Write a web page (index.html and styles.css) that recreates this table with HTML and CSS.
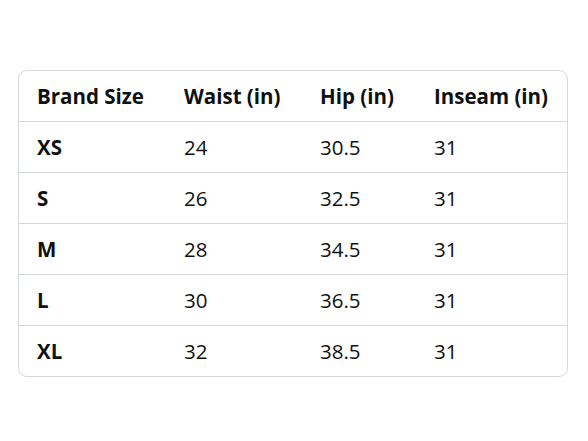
FILE: index.html
```html
<!DOCTYPE html>
<html>
<head>
<meta charset="utf-8">
<link rel="stylesheet" href="styles.css">
</head>
<body>
<div class="page">
  <table class="size-table">
    <colgroup>
      <col class="c1"><col class="c2"><col class="c3"><col class="c4">
    </colgroup>
    <thead>
      <tr><th>Brand Size</th><th>Waist (in)</th><th>Hip (in)</th><th>Inseam (in)</th></tr>
    </thead>
    <tbody>
      <tr><th>XS</th><td>24</td><td>30.5</td><td>31</td></tr>
      <tr><th>S</th><td>26</td><td>32.5</td><td>31</td></tr>
      <tr><th>M</th><td>28</td><td>34.5</td><td>31</td></tr>
      <tr><th>L</th><td>30</td><td>36.5</td><td>31</td></tr>
      <tr><th>XL</th><td>32</td><td>38.5</td><td>31</td></tr>
    </tbody>
  </table>
</div>
</body>
</html>
```

FILE: styles.css
```css
html, body {
  margin: 0;
  padding: 0;
  background: #ffffff;
}
.page {
  padding: 70px 0 0 18px;
  font-family: "Open Sans", "Noto Sans", sans-serif;
  color: #0f1111;
}
.size-table {
  width: 550px;
  border-collapse: separate;
  border-spacing: 0;
  border: 1px solid #d5d9d9;
  border-radius: 9px;
  table-layout: fixed;
  font-size: 20.5px;
}
.c1 { width: 147px; }
.c2 { width: 136px; }
.c3 { width: 114px; }
.c4 { width: 151px; }
.size-table th,
.size-table td {
  height: 50px;
  padding: 0 0 0 18px;
  text-align: left;
  vertical-align: middle;
  line-height: 24px;
  white-space: nowrap;
}
.size-table th { font-weight: 700; }
.size-table td { font-weight: 400; }
.size-table tbody tr th,
.size-table tbody tr td {
  border-top: 1px solid #d5d9d9;
}
```
